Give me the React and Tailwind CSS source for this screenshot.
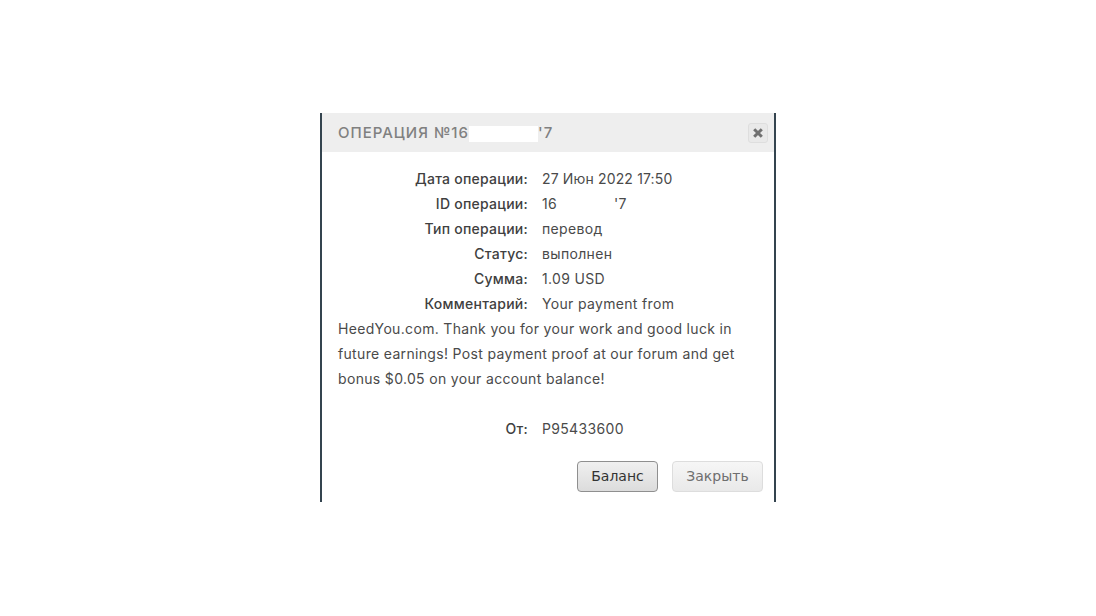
import React from 'react';

const FONT = "font-['Inter','Noto_Sans',sans-serif]";

const Row = ({ label, children }) => (
  <div>
    <span className="inline-block w-[190px] text-right mr-[14px] text-[#404040] font-[450] tracking-[0.25px]">{label}</span>
    {children}
  </div>
);

const App = () => (
  <div className={`min-h-[616px] bg-white pt-[113px] ${FONT}`}>
    <div className="mx-auto w-[456px] h-[389px] border-x-2 border-[#34444f] bg-white">
      <div className="h-[39px] bg-[#eeeeee] flex items-center justify-between pl-4 pr-[6px]">
        <h1 className="pt-[2px] text-[15px] font-medium tracking-[1px] text-[#808080] whitespace-nowrap">
          ОПЕРАЦИЯ №16<span className="inline-block w-[69px] h-[16px] bg-white align-middle" />'7
        </h1>
        <button className="w-[20px] h-[20px] rounded-[3px] border border-[#dedede] bg-[#e9e9e9] flex items-center justify-center">
          <svg width="12" height="12" viewBox="0 0 12 12" fill="none" stroke="#707070" strokeWidth="3">
            <path d="M2.2 2.2 9.8 9.8M9.8 2.2 2.2 9.8" />
          </svg>
        </button>
      </div>
      <div className="pt-[14px] px-4 text-[14px] leading-[25px] tracking-[0.33px] text-[#4a4a4a]">
        <Row label="Дата операции:"><span className="tracking-[0.15px]">27 Июн 2022 17:50</span></Row>
        <Row label="ID операции:">16<span className="inline-block w-[57px]" />'7</Row>
        <Row label="Тип операции:">перевод</Row>
        <Row label="Статус:">выполнен</Row>
        <Row label="Сумма:">1.09 USD</Row>
        <Row label="Комментарий:">
          Your payment from HeedYou.com. Thank you for your work and good luck in future earnings! Post payment proof at our forum and get bonus $0.05 on your account balance!
        </Row>
        <div className="h-[25px]" />
        <Row label="От:">P95433600</Row>
      </div>
      <div className="flex justify-end gap-[14px] pt-[20px] pr-[11px] font-['DejaVu_Sans',sans-serif] text-[14px]">
        <button className="w-[81px] h-[31px] rounded-[4px] border border-[#8f8f8f] bg-gradient-to-b from-[#f0f0f0] to-[#dcdcdc] text-[#333333]">Баланс</button>
        <button className="w-[91px] h-[31px] rounded-[4px] border border-[#dddddd] bg-gradient-to-b from-[#f6f6f6] to-[#e9e9e9] text-[#6f6f6f]">Закрыть</button>
      </div>
    </div>
  </div>
);

export default App;
